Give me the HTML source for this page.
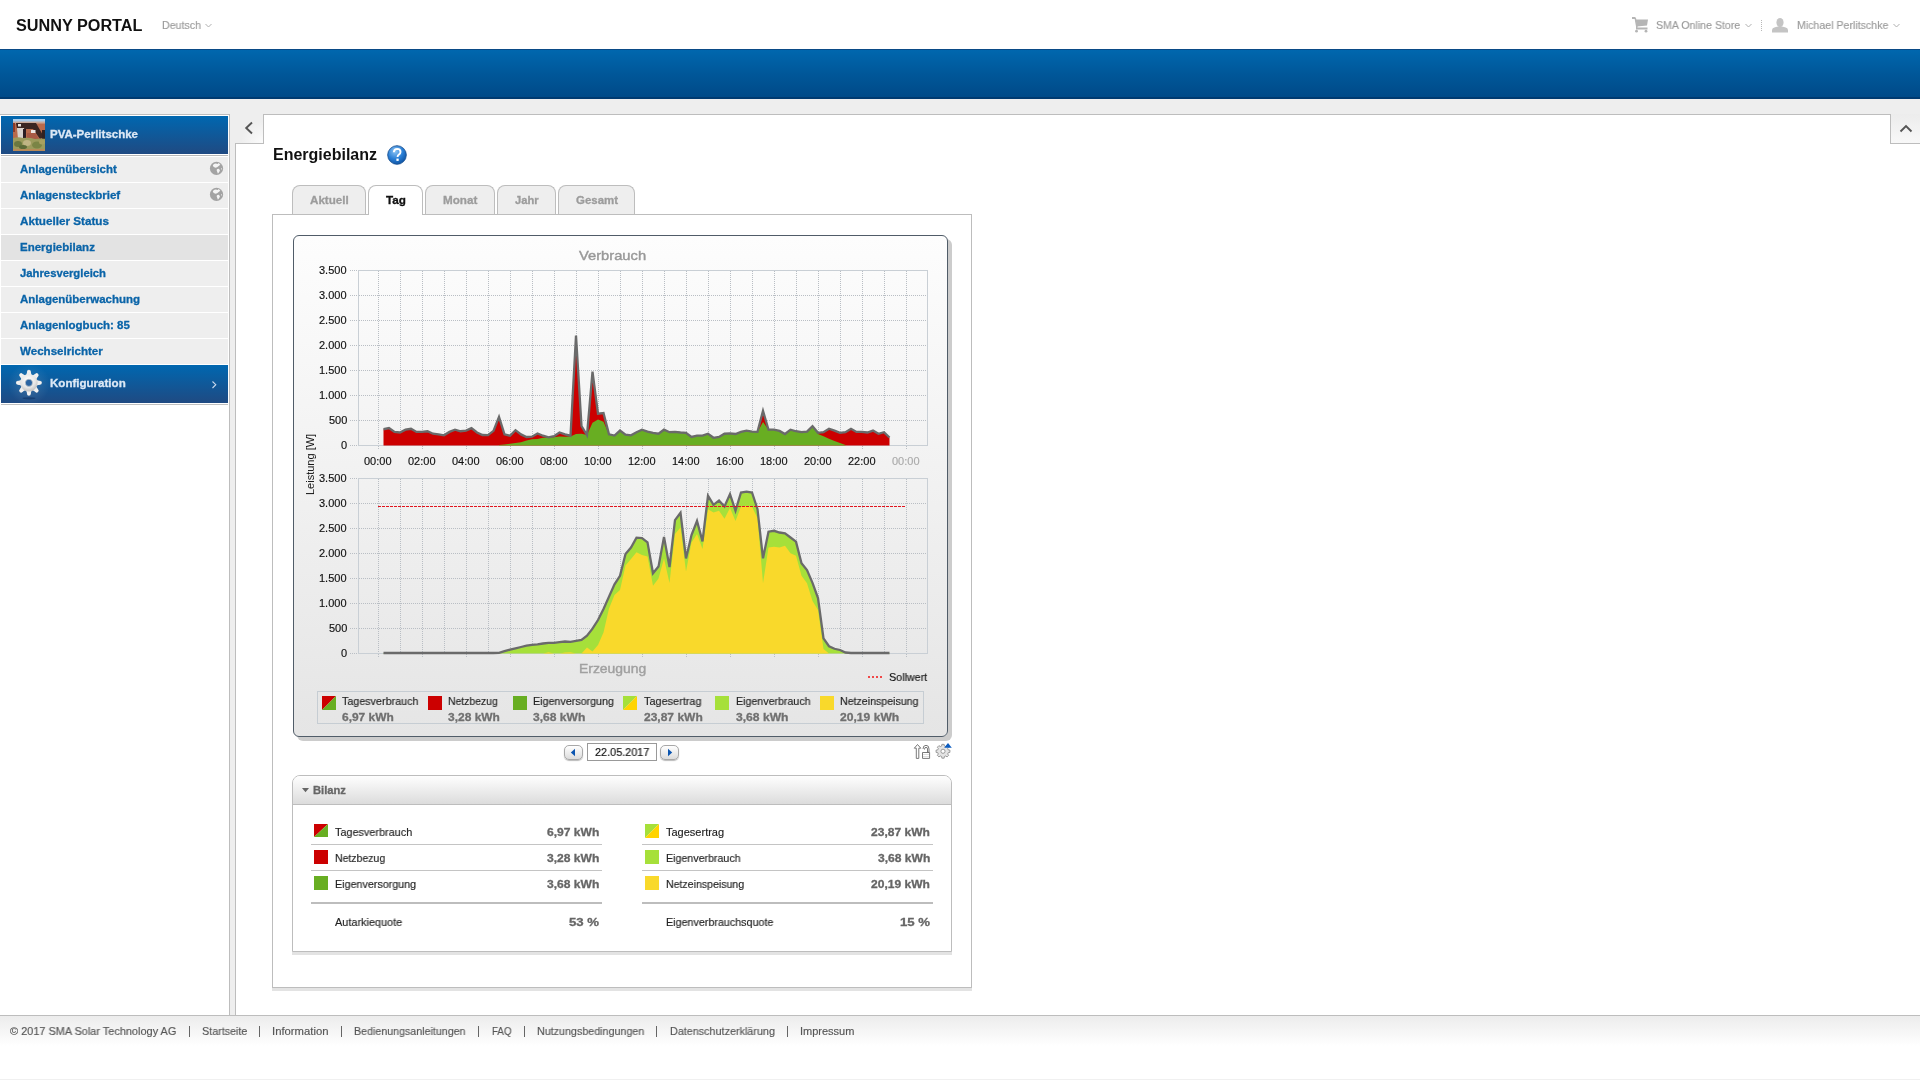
<!DOCTYPE html>
<html><head><meta charset="utf-8"><title>Sunny Portal</title><style>
html,body{margin:0;padding:0;width:1920px;height:1080px;overflow:hidden;background:#fff;font-family:"Liberation Sans",sans-serif;}
.a{position:absolute;box-sizing:border-box;}
.t{position:absolute;white-space:nowrap;line-height:1;transform-origin:0 0;will-change:transform;font-family:"Liberation Sans",sans-serif;}
#blue{left:0;top:49px;width:1920px;height:50px;background:linear-gradient(#0a4a86 0,#0a4a86 1px,#0067ae 1px,#005799 50%,#004a88 48px,#003a70 48px,#003a70 50px);}
#graybg{left:0;top:99px;width:1920px;height:917px;background:#eeeeee;}
#side{left:0;top:114px;width:230px;height:902px;background:#fff;border-top:1px solid #bdbdbd;border-right:1px solid #bdbdbd;}
.mi{left:1px;width:227px;height:25px;background:#eeeeee;}
.mi.sel{background:#e3e3e3;}
.bluehead{left:1px;width:227px;height:38px;background:linear-gradient(#0067b0,#1f4a82);}
#main1{left:235px;top:143px;width:1685px;height:873px;background:#fff;border-left:1px solid #bdbdbd;}
#main2{left:263px;top:114px;width:1627px;height:30px;background:#fff;border-top:1px solid #bdbdbd;border-left:1px solid #bdbdbd;}
#notchL{left:235px;top:114px;width:28px;height:30px;background:radial-gradient(circle at 100% 100%,#fbfbfb 0,#eeeeee 22px);border-bottom:1px solid #bdbdbd;}
#notchR{left:1890px;top:114px;width:30px;height:30px;background:linear-gradient(#ececec,#f8f8f8);border-left:1px solid #bdbdbd;border-bottom:1px solid #bdbdbd;}
#footer{left:0;top:1015px;width:1920px;height:65px;border-top:1px solid #bdbdbd;background:linear-gradient(#ececec 0,#ffffff 30px);}
#panel{left:272px;top:214px;width:700px;height:774px;background:#fff;border:1px solid #bdbdbd;box-shadow:0 3px 0 #e3e3e3;}
.tab{top:185px;height:29px;background:#eeeeee;border:1px solid #bdbdbd;border-bottom:none;border-radius:8px 8px 0 0;}
.tab.act{background:#fff;height:30px;}
#chartbox{left:293px;top:235px;width:655px;height:502px;border:1px solid #505c68;border-radius:6px;background:linear-gradient(#fdfdfd 0,#e5e5e5 100%);box-shadow:4px 4px 0 #cccccc;}
#legend{left:317px;top:691px;width:607px;height:33px;border:1px solid #c6cdd3;}
.sw{width:14px;height:14px;}
.btn{top:745px;width:19px;height:15px;border:1px solid #a8a8a8;border-radius:5px;background:linear-gradient(#ffffff,#dcdcdc);box-shadow:0 1px 1px #bbb;}
#dateinp{left:587px;top:743px;width:70px;height:18px;border:1px solid #999;background:#fff;}
#bilanz{left:292px;top:775px;width:660px;height:177px;border:1px solid #bdbdbd;border-radius:8px 8px 0 0;background:#fff;box-shadow:0 3px 0 #e3e3e3;}
#bilhead{left:293px;top:776px;width:658px;height:29px;border-radius:7px 7px 0 0;background:linear-gradient(#fefefe,#dcdcdc);border-bottom:1px solid #bdbdbd;}
.sep{height:1px;background:#c4c4c4;}
.sep2{height:2px;background:#bdbdbd;}
.fsep{top:1026px;width:1px;height:11px;background:#666;}
svg.full{position:absolute;left:0;top:0;width:1920px;height:1080px;}

</style></head><body>
<div class="a" id="blue"></div>
<div class="a" id="graybg"></div>
<div class="a" id="side"></div>
<div class="a bluehead" style="top:116px"></div>
<div class="a" style="left:1px;top:155px;width:227px;height:1px;background:#b8b8b8"></div>
<div class="a mi" style="top:157px"></div>
<div class="a mi" style="top:183px"></div>
<div class="a mi" style="top:209px"></div>
<div class="a mi sel" style="top:235px"></div>
<div class="a mi" style="top:261px"></div>
<div class="a mi" style="top:287px"></div>
<div class="a mi" style="top:313px"></div>
<div class="a mi" style="top:339px"></div>
<div class="a bluehead" style="top:365px"></div>
<div class="a" style="left:1px;top:404px;width:227px;height:1px;background:#c0c0c0"></div>
<div class="a" id="main1"></div>
<div class="a" id="main2"></div>
<div class="a" id="notchL"></div>
<div class="a" id="notchR"></div>
<div class="a" id="footer"></div>
<div class="a" style="left:0;top:1079px;width:1920px;height:1px;background:#f0f0f0"></div>
<div class="a" id="panel"></div>
<div class="a tab" style="left:292px;width:74px"></div>
<div class="a tab act" style="left:368px;width:55px"></div>
<div class="a tab" style="left:425px;width:70px"></div>
<div class="a tab" style="left:497px;width:59px"></div>
<div class="a tab" style="left:558px;width:77px"></div>
<div class="a" id="chartbox"></div>
<div class="a" id="legend"></div>
<div class="a" id="dateinp"></div>
<div class="a btn" style="left:564px"></div>
<div class="a btn" style="left:660px"></div>
<div class="a" id="bilanz"></div>
<div class="a" id="bilhead"></div>
<div class="a sep" style="left:311px;top:844px;width:291px"></div>
<div class="a sep" style="left:311px;top:870px;width:291px"></div>
<div class="a sep2" style="left:311px;top:902px;width:291px"></div>
<div class="a sep" style="left:642px;top:844px;width:291px"></div>
<div class="a sep" style="left:642px;top:870px;width:291px"></div>
<div class="a sep2" style="left:642px;top:902px;width:291px"></div>
<div class="a fsep" style="left:189px"></div>
<div class="a fsep" style="left:259px"></div>
<div class="a fsep" style="left:341px"></div>
<div class="a fsep" style="left:478px"></div>
<div class="a fsep" style="left:524px"></div>
<div class="a fsep" style="left:656px"></div>
<div class="a fsep" style="left:787px"></div>
<svg class="full" viewBox="0 0 1920 1080">
<line x1="359" y1="295.5" x2="927" y2="295.5" stroke="#b9bec4" stroke-width="1" stroke-dasharray="1 1"/>
<line x1="359" y1="320.5" x2="927" y2="320.5" stroke="#b9bec4" stroke-width="1" stroke-dasharray="1 1"/>
<line x1="359" y1="345.5" x2="927" y2="345.5" stroke="#b9bec4" stroke-width="1" stroke-dasharray="1 1"/>
<line x1="359" y1="370.5" x2="927" y2="370.5" stroke="#b9bec4" stroke-width="1" stroke-dasharray="1 1"/>
<line x1="359" y1="395.5" x2="927" y2="395.5" stroke="#b9bec4" stroke-width="1" stroke-dasharray="1 1"/>
<line x1="359" y1="420.5" x2="927" y2="420.5" stroke="#b9bec4" stroke-width="1" stroke-dasharray="1 1"/>
<line x1="350" y1="270.5" x2="358" y2="270.5" stroke="#b9bec4" stroke-width="1" stroke-dasharray="1 1"/>
<line x1="350" y1="295.5" x2="358" y2="295.5" stroke="#b9bec4" stroke-width="1" stroke-dasharray="1 1"/>
<line x1="350" y1="320.5" x2="358" y2="320.5" stroke="#b9bec4" stroke-width="1" stroke-dasharray="1 1"/>
<line x1="350" y1="345.5" x2="358" y2="345.5" stroke="#b9bec4" stroke-width="1" stroke-dasharray="1 1"/>
<line x1="350" y1="370.5" x2="358" y2="370.5" stroke="#b9bec4" stroke-width="1" stroke-dasharray="1 1"/>
<line x1="350" y1="395.5" x2="358" y2="395.5" stroke="#b9bec4" stroke-width="1" stroke-dasharray="1 1"/>
<line x1="350" y1="420.5" x2="358" y2="420.5" stroke="#b9bec4" stroke-width="1" stroke-dasharray="1 1"/>
<line x1="350" y1="445.5" x2="358" y2="445.5" stroke="#b9bec4" stroke-width="1" stroke-dasharray="1 1"/>
<line x1="378.5" y1="271" x2="378.5" y2="445" stroke="#b9bec4" stroke-width="1" stroke-dasharray="1 1"/>
<line x1="400.5" y1="271" x2="400.5" y2="445" stroke="#b9bec4" stroke-width="1" stroke-dasharray="1 1"/>
<line x1="422.5" y1="271" x2="422.5" y2="445" stroke="#b9bec4" stroke-width="1" stroke-dasharray="1 1"/>
<line x1="444.5" y1="271" x2="444.5" y2="445" stroke="#b9bec4" stroke-width="1" stroke-dasharray="1 1"/>
<line x1="466.5" y1="271" x2="466.5" y2="445" stroke="#b9bec4" stroke-width="1" stroke-dasharray="1 1"/>
<line x1="488.5" y1="271" x2="488.5" y2="445" stroke="#b9bec4" stroke-width="1" stroke-dasharray="1 1"/>
<line x1="510.5" y1="271" x2="510.5" y2="445" stroke="#b9bec4" stroke-width="1" stroke-dasharray="1 1"/>
<line x1="532.5" y1="271" x2="532.5" y2="445" stroke="#b9bec4" stroke-width="1" stroke-dasharray="1 1"/>
<line x1="554.5" y1="271" x2="554.5" y2="445" stroke="#b9bec4" stroke-width="1" stroke-dasharray="1 1"/>
<line x1="576.5" y1="271" x2="576.5" y2="445" stroke="#b9bec4" stroke-width="1" stroke-dasharray="1 1"/>
<line x1="598.5" y1="271" x2="598.5" y2="445" stroke="#b9bec4" stroke-width="1" stroke-dasharray="1 1"/>
<line x1="620.5" y1="271" x2="620.5" y2="445" stroke="#b9bec4" stroke-width="1" stroke-dasharray="1 1"/>
<line x1="642.5" y1="271" x2="642.5" y2="445" stroke="#b9bec4" stroke-width="1" stroke-dasharray="1 1"/>
<line x1="664.5" y1="271" x2="664.5" y2="445" stroke="#b9bec4" stroke-width="1" stroke-dasharray="1 1"/>
<line x1="686.5" y1="271" x2="686.5" y2="445" stroke="#b9bec4" stroke-width="1" stroke-dasharray="1 1"/>
<line x1="708.5" y1="271" x2="708.5" y2="445" stroke="#b9bec4" stroke-width="1" stroke-dasharray="1 1"/>
<line x1="730.5" y1="271" x2="730.5" y2="445" stroke="#b9bec4" stroke-width="1" stroke-dasharray="1 1"/>
<line x1="752.5" y1="271" x2="752.5" y2="445" stroke="#b9bec4" stroke-width="1" stroke-dasharray="1 1"/>
<line x1="774.5" y1="271" x2="774.5" y2="445" stroke="#b9bec4" stroke-width="1" stroke-dasharray="1 1"/>
<line x1="796.5" y1="271" x2="796.5" y2="445" stroke="#b9bec4" stroke-width="1" stroke-dasharray="1 1"/>
<line x1="818.5" y1="271" x2="818.5" y2="445" stroke="#b9bec4" stroke-width="1" stroke-dasharray="1 1"/>
<line x1="840.5" y1="271" x2="840.5" y2="445" stroke="#b9bec4" stroke-width="1" stroke-dasharray="1 1"/>
<line x1="862.5" y1="271" x2="862.5" y2="445" stroke="#b9bec4" stroke-width="1" stroke-dasharray="1 1"/>
<line x1="884.5" y1="271" x2="884.5" y2="445" stroke="#b9bec4" stroke-width="1" stroke-dasharray="1 1"/>
<line x1="906.5" y1="271" x2="906.5" y2="445" stroke="#b9bec4" stroke-width="1" stroke-dasharray="1 1"/>
<line x1="378.5" y1="446" x2="378.5" y2="450" stroke="#b9bec4" stroke-width="1" stroke-dasharray="1 1"/>
<line x1="422.5" y1="446" x2="422.5" y2="450" stroke="#b9bec4" stroke-width="1" stroke-dasharray="1 1"/>
<line x1="466.5" y1="446" x2="466.5" y2="450" stroke="#b9bec4" stroke-width="1" stroke-dasharray="1 1"/>
<line x1="510.5" y1="446" x2="510.5" y2="450" stroke="#b9bec4" stroke-width="1" stroke-dasharray="1 1"/>
<line x1="554.5" y1="446" x2="554.5" y2="450" stroke="#b9bec4" stroke-width="1" stroke-dasharray="1 1"/>
<line x1="598.5" y1="446" x2="598.5" y2="450" stroke="#b9bec4" stroke-width="1" stroke-dasharray="1 1"/>
<line x1="642.5" y1="446" x2="642.5" y2="450" stroke="#b9bec4" stroke-width="1" stroke-dasharray="1 1"/>
<line x1="686.5" y1="446" x2="686.5" y2="450" stroke="#b9bec4" stroke-width="1" stroke-dasharray="1 1"/>
<line x1="730.5" y1="446" x2="730.5" y2="450" stroke="#b9bec4" stroke-width="1" stroke-dasharray="1 1"/>
<line x1="774.5" y1="446" x2="774.5" y2="450" stroke="#b9bec4" stroke-width="1" stroke-dasharray="1 1"/>
<line x1="818.5" y1="446" x2="818.5" y2="450" stroke="#b9bec4" stroke-width="1" stroke-dasharray="1 1"/>
<line x1="862.5" y1="446" x2="862.5" y2="450" stroke="#b9bec4" stroke-width="1" stroke-dasharray="1 1"/>
<line x1="906.5" y1="446" x2="906.5" y2="450" stroke="#b9bec4" stroke-width="1" stroke-dasharray="1 1"/>
<rect x="358.5" y="270.5" width="569" height="175" fill="none" stroke="#c9cfd5" stroke-width="1"/>
<line x1="359" y1="503.5" x2="927" y2="503.5" stroke="#b9bec4" stroke-width="1" stroke-dasharray="1 1"/>
<line x1="359" y1="528.5" x2="927" y2="528.5" stroke="#b9bec4" stroke-width="1" stroke-dasharray="1 1"/>
<line x1="359" y1="553.5" x2="927" y2="553.5" stroke="#b9bec4" stroke-width="1" stroke-dasharray="1 1"/>
<line x1="359" y1="578.5" x2="927" y2="578.5" stroke="#b9bec4" stroke-width="1" stroke-dasharray="1 1"/>
<line x1="359" y1="603.5" x2="927" y2="603.5" stroke="#b9bec4" stroke-width="1" stroke-dasharray="1 1"/>
<line x1="359" y1="628.5" x2="927" y2="628.5" stroke="#b9bec4" stroke-width="1" stroke-dasharray="1 1"/>
<line x1="350" y1="478.5" x2="358" y2="478.5" stroke="#b9bec4" stroke-width="1" stroke-dasharray="1 1"/>
<line x1="350" y1="503.5" x2="358" y2="503.5" stroke="#b9bec4" stroke-width="1" stroke-dasharray="1 1"/>
<line x1="350" y1="528.5" x2="358" y2="528.5" stroke="#b9bec4" stroke-width="1" stroke-dasharray="1 1"/>
<line x1="350" y1="553.5" x2="358" y2="553.5" stroke="#b9bec4" stroke-width="1" stroke-dasharray="1 1"/>
<line x1="350" y1="578.5" x2="358" y2="578.5" stroke="#b9bec4" stroke-width="1" stroke-dasharray="1 1"/>
<line x1="350" y1="603.5" x2="358" y2="603.5" stroke="#b9bec4" stroke-width="1" stroke-dasharray="1 1"/>
<line x1="350" y1="628.5" x2="358" y2="628.5" stroke="#b9bec4" stroke-width="1" stroke-dasharray="1 1"/>
<line x1="350" y1="653.5" x2="358" y2="653.5" stroke="#b9bec4" stroke-width="1" stroke-dasharray="1 1"/>
<line x1="378.5" y1="479" x2="378.5" y2="653" stroke="#b9bec4" stroke-width="1" stroke-dasharray="1 1"/>
<line x1="400.5" y1="479" x2="400.5" y2="653" stroke="#b9bec4" stroke-width="1" stroke-dasharray="1 1"/>
<line x1="422.5" y1="479" x2="422.5" y2="653" stroke="#b9bec4" stroke-width="1" stroke-dasharray="1 1"/>
<line x1="444.5" y1="479" x2="444.5" y2="653" stroke="#b9bec4" stroke-width="1" stroke-dasharray="1 1"/>
<line x1="466.5" y1="479" x2="466.5" y2="653" stroke="#b9bec4" stroke-width="1" stroke-dasharray="1 1"/>
<line x1="488.5" y1="479" x2="488.5" y2="653" stroke="#b9bec4" stroke-width="1" stroke-dasharray="1 1"/>
<line x1="510.5" y1="479" x2="510.5" y2="653" stroke="#b9bec4" stroke-width="1" stroke-dasharray="1 1"/>
<line x1="532.5" y1="479" x2="532.5" y2="653" stroke="#b9bec4" stroke-width="1" stroke-dasharray="1 1"/>
<line x1="554.5" y1="479" x2="554.5" y2="653" stroke="#b9bec4" stroke-width="1" stroke-dasharray="1 1"/>
<line x1="576.5" y1="479" x2="576.5" y2="653" stroke="#b9bec4" stroke-width="1" stroke-dasharray="1 1"/>
<line x1="598.5" y1="479" x2="598.5" y2="653" stroke="#b9bec4" stroke-width="1" stroke-dasharray="1 1"/>
<line x1="620.5" y1="479" x2="620.5" y2="653" stroke="#b9bec4" stroke-width="1" stroke-dasharray="1 1"/>
<line x1="642.5" y1="479" x2="642.5" y2="653" stroke="#b9bec4" stroke-width="1" stroke-dasharray="1 1"/>
<line x1="664.5" y1="479" x2="664.5" y2="653" stroke="#b9bec4" stroke-width="1" stroke-dasharray="1 1"/>
<line x1="686.5" y1="479" x2="686.5" y2="653" stroke="#b9bec4" stroke-width="1" stroke-dasharray="1 1"/>
<line x1="708.5" y1="479" x2="708.5" y2="653" stroke="#b9bec4" stroke-width="1" stroke-dasharray="1 1"/>
<line x1="730.5" y1="479" x2="730.5" y2="653" stroke="#b9bec4" stroke-width="1" stroke-dasharray="1 1"/>
<line x1="752.5" y1="479" x2="752.5" y2="653" stroke="#b9bec4" stroke-width="1" stroke-dasharray="1 1"/>
<line x1="774.5" y1="479" x2="774.5" y2="653" stroke="#b9bec4" stroke-width="1" stroke-dasharray="1 1"/>
<line x1="796.5" y1="479" x2="796.5" y2="653" stroke="#b9bec4" stroke-width="1" stroke-dasharray="1 1"/>
<line x1="818.5" y1="479" x2="818.5" y2="653" stroke="#b9bec4" stroke-width="1" stroke-dasharray="1 1"/>
<line x1="840.5" y1="479" x2="840.5" y2="653" stroke="#b9bec4" stroke-width="1" stroke-dasharray="1 1"/>
<line x1="862.5" y1="479" x2="862.5" y2="653" stroke="#b9bec4" stroke-width="1" stroke-dasharray="1 1"/>
<line x1="884.5" y1="479" x2="884.5" y2="653" stroke="#b9bec4" stroke-width="1" stroke-dasharray="1 1"/>
<line x1="906.5" y1="479" x2="906.5" y2="653" stroke="#b9bec4" stroke-width="1" stroke-dasharray="1 1"/>
<line x1="378.5" y1="654" x2="378.5" y2="658" stroke="#b9bec4" stroke-width="1" stroke-dasharray="1 1"/>
<line x1="422.5" y1="654" x2="422.5" y2="658" stroke="#b9bec4" stroke-width="1" stroke-dasharray="1 1"/>
<line x1="466.5" y1="654" x2="466.5" y2="658" stroke="#b9bec4" stroke-width="1" stroke-dasharray="1 1"/>
<line x1="510.5" y1="654" x2="510.5" y2="658" stroke="#b9bec4" stroke-width="1" stroke-dasharray="1 1"/>
<line x1="554.5" y1="654" x2="554.5" y2="658" stroke="#b9bec4" stroke-width="1" stroke-dasharray="1 1"/>
<line x1="598.5" y1="654" x2="598.5" y2="658" stroke="#b9bec4" stroke-width="1" stroke-dasharray="1 1"/>
<line x1="642.5" y1="654" x2="642.5" y2="658" stroke="#b9bec4" stroke-width="1" stroke-dasharray="1 1"/>
<line x1="686.5" y1="654" x2="686.5" y2="658" stroke="#b9bec4" stroke-width="1" stroke-dasharray="1 1"/>
<line x1="730.5" y1="654" x2="730.5" y2="658" stroke="#b9bec4" stroke-width="1" stroke-dasharray="1 1"/>
<line x1="774.5" y1="654" x2="774.5" y2="658" stroke="#b9bec4" stroke-width="1" stroke-dasharray="1 1"/>
<line x1="818.5" y1="654" x2="818.5" y2="658" stroke="#b9bec4" stroke-width="1" stroke-dasharray="1 1"/>
<line x1="862.5" y1="654" x2="862.5" y2="658" stroke="#b9bec4" stroke-width="1" stroke-dasharray="1 1"/>
<line x1="906.5" y1="654" x2="906.5" y2="658" stroke="#b9bec4" stroke-width="1" stroke-dasharray="1 1"/>
<rect x="358.5" y="478.5" width="569" height="175" fill="none" stroke="#c9cfd5" stroke-width="1"/>
<path d="M383.50,445.5 L383.50,429.25 L389.00,428.10 L394.50,431.90 L400.00,432.50 L405.50,429.70 L411.00,428.75 L416.50,431.90 L422.00,431.90 L427.50,431.25 L433.00,433.75 L438.50,434.40 L444.00,435.30 L449.50,431.90 L455.00,429.70 L460.50,431.25 L466.00,430.60 L471.50,428.10 L477.00,432.50 L482.50,435.00 L488.00,435.10 L493.50,430.90 L499.00,416.90 L504.50,434.40 L510.00,435.70 L515.50,430.20 L521.00,434.40 L526.50,437.00 L532.00,436.70 L537.50,433.50 L543.00,435.70 L548.50,437.40 L554.00,436.10 L559.50,432.50 L565.00,434.40 L570.50,435.70 L576.00,335.60 L581.50,426.00 L587.00,435.10 L592.50,371.70 L598.00,413.70 L603.50,413.00 L609.00,434.40 L614.50,435.60 L620.00,430.60 L625.50,434.70 L631.00,435.30 L636.50,432.20 L642.00,429.70 L647.50,431.60 L653.00,432.80 L658.50,433.75 L664.00,429.70 L669.50,432.20 L675.00,431.90 L680.50,432.50 L686.00,432.80 L691.50,436.90 L697.00,435.60 L702.50,435.60 L708.00,433.75 L713.50,437.80 L719.00,437.00 L724.50,433.75 L730.00,433.40 L735.50,434.00 L741.00,431.90 L746.50,430.60 L752.00,431.60 L757.50,431.90 L763.00,410.90 L768.50,429.70 L774.00,429.70 L779.50,430.90 L785.00,434.00 L790.50,429.70 L796.00,431.25 L801.50,432.20 L807.00,431.60 L812.50,426.25 L818.00,432.80 L823.50,432.20 L829.00,428.75 L834.50,430.60 L840.00,432.80 L845.50,432.20 L851.00,428.75 L856.50,431.90 L862.00,431.90 L867.50,432.50 L873.00,430.60 L878.50,433.75 L884.00,432.20 L889.50,437.50 L889.50,445.5 Z" fill="#cc0000"/>
<path d="M499.00,445.5 L499.00,445.00 L504.50,444.50 L510.00,443.80 L515.50,443.00 L521.00,442.20 L526.50,440.50 L532.00,439.30 L537.50,439.00 L543.00,437.70 L548.50,437.40 L554.00,437.20 L559.50,436.40 L565.00,436.70 L570.50,436.60 L576.00,434.10 L581.50,433.80 L587.00,435.10 L592.50,422.80 L598.00,419.40 L603.50,421.70 L609.00,434.40 L614.50,435.60 L620.00,430.60 L625.50,434.70 L631.00,435.30 L636.50,432.20 L642.00,429.70 L647.50,431.60 L653.00,432.80 L658.50,433.75 L664.00,429.70 L669.50,432.20 L675.00,431.90 L680.50,432.50 L686.00,432.80 L691.50,436.90 L697.00,435.60 L702.50,435.60 L708.00,433.75 L713.50,437.80 L719.00,437.00 L724.50,433.75 L730.00,433.40 L735.50,434.00 L741.00,431.90 L746.50,430.60 L752.00,431.60 L757.50,431.90 L763.00,421.90 L768.50,429.70 L774.00,429.70 L779.50,430.90 L785.00,434.00 L790.50,429.70 L796.00,431.25 L801.50,432.20 L807.00,431.60 L812.50,426.25 L818.00,434.00 L823.50,436.25 L829.00,438.75 L834.50,440.90 L840.00,443.00 L845.50,445.00 L845.50,445.5 Z" fill="#68ae22"/>
<path d="M383.50,429.25 L389.00,428.10 L394.50,431.90 L400.00,432.50 L405.50,429.70 L411.00,428.75 L416.50,431.90 L422.00,431.90 L427.50,431.25 L433.00,433.75 L438.50,434.40 L444.00,435.30 L449.50,431.90 L455.00,429.70 L460.50,431.25 L466.00,430.60 L471.50,428.10 L477.00,432.50 L482.50,435.00 L488.00,435.10 L493.50,430.90 L499.00,416.90 L504.50,434.40 L510.00,435.70 L515.50,430.20 L521.00,434.40 L526.50,437.00 L532.00,436.70 L537.50,433.50 L543.00,435.70 L548.50,437.40 L554.00,436.10 L559.50,432.50 L565.00,434.40 L570.50,435.70 L576.00,335.60 L581.50,426.00 L587.00,435.10 L592.50,371.70 L598.00,413.70 L603.50,413.00 L609.00,434.40 L614.50,435.60 L620.00,430.60 L625.50,434.70 L631.00,435.30 L636.50,432.20 L642.00,429.70 L647.50,431.60 L653.00,432.80 L658.50,433.75 L664.00,429.70 L669.50,432.20 L675.00,431.90 L680.50,432.50 L686.00,432.80 L691.50,436.90 L697.00,435.60 L702.50,435.60 L708.00,433.75 L713.50,437.80 L719.00,437.00 L724.50,433.75 L730.00,433.40 L735.50,434.00 L741.00,431.90 L746.50,430.60 L752.00,431.60 L757.50,431.90 L763.00,410.90 L768.50,429.70 L774.00,429.70 L779.50,430.90 L785.00,434.00 L790.50,429.70 L796.00,431.25 L801.50,432.20 L807.00,431.60 L812.50,426.25 L818.00,432.80 L823.50,432.20 L829.00,428.75 L834.50,430.60 L840.00,432.80 L845.50,432.20 L851.00,428.75 L856.50,431.90 L862.00,431.90 L867.50,432.50 L873.00,430.60 L878.50,433.75 L884.00,432.20 L889.50,437.50" fill="none" stroke="#6a6a6a" stroke-width="2.3" stroke-linejoin="miter"/>
<path d="M383.50,653.5 L383.50,653.00 L389.00,653.00 L394.50,653.00 L400.00,653.00 L405.50,653.00 L411.00,653.00 L416.50,653.00 L422.00,653.00 L427.50,653.00 L433.00,653.00 L438.50,653.00 L444.00,653.00 L449.50,653.00 L455.00,653.00 L460.50,653.00 L466.00,653.00 L471.50,653.00 L477.00,653.00 L482.50,653.00 L488.00,653.00 L493.50,653.00 L499.00,652.90 L504.50,651.20 L510.00,649.60 L515.50,648.30 L521.00,647.00 L526.50,645.70 L532.00,644.80 L537.50,644.40 L543.00,643.50 L548.50,642.80 L554.00,642.80 L559.50,642.20 L565.00,641.50 L570.50,641.80 L576.00,640.90 L581.50,639.90 L587.00,635.70 L592.50,628.60 L598.00,620.00 L603.50,609.00 L609.00,596.60 L614.50,584.40 L620.00,575.80 L625.50,554.00 L631.00,547.50 L636.50,537.70 L642.00,538.10 L647.50,542.30 L653.00,573.30 L658.50,566.60 L664.00,536.90 L669.50,567.00 L675.00,520.10 L680.50,512.70 L686.00,558.40 L691.50,535.00 L697.00,521.00 L702.50,541.40 L708.00,495.70 L713.50,504.80 L719.00,500.60 L724.50,506.50 L730.00,494.10 L735.50,510.70 L741.00,492.50 L746.50,491.70 L752.00,492.50 L757.50,509.20 L763.00,558.30 L768.50,531.70 L774.00,530.80 L779.50,532.50 L785.00,533.30 L790.50,537.50 L796.00,541.70 L801.50,563.30 L807.00,570.00 L812.50,582.80 L818.00,598.00 L823.50,638.30 L829.00,646.25 L834.50,648.75 L840.00,650.00 L845.50,652.50 L851.00,653.00 L856.50,653.00 L862.00,653.00 L867.50,653.00 L873.00,653.00 L878.50,653.00 L884.00,653.00 L889.50,653.00 L889.50,653.5 Z" fill="#a6e03a"/>
<path d="M499.00,653.5 L499.00,653.50 L504.50,653.50 L510.00,653.50 L515.50,653.50 L521.00,653.50 L526.50,653.50 L532.00,653.50 L537.50,653.50 L543.00,653.50 L548.50,652.20 L554.00,653.50 L559.50,653.50 L565.00,652.50 L570.50,652.20 L576.00,653.50 L581.50,653.50 L587.00,647.40 L592.50,651.60 L598.00,645.00 L603.50,632.50 L609.00,608.50 L614.50,595.00 L620.00,590.00 L625.50,565.50 L631.00,559.00 L636.50,552.20 L642.00,555.00 L647.50,556.60 L653.00,585.70 L658.50,578.50 L664.00,558.60 L669.50,583.00 L675.00,534.00 L680.50,527.60 L686.00,571.40 L691.50,542.60 L697.00,534.00 L702.50,549.00 L708.00,509.30 L713.50,512.60 L719.00,510.70 L724.50,518.70 L730.00,508.00 L735.50,521.00 L741.00,506.70 L746.50,505.80 L752.00,506.70 L757.50,518.30 L763.00,583.30 L768.50,547.50 L774.00,546.70 L779.50,547.50 L785.00,545.80 L790.50,553.30 L796.00,555.80 L801.50,575.80 L807.00,583.30 L812.50,601.00 L818.00,610.00 L823.50,649.00 L829.00,653.50 L834.50,653.50 L840.00,653.50 L845.50,653.50 L845.50,653.5 Z" fill="#f9d92b"/>
<path d="M383.50,653.00 L389.00,653.00 L394.50,653.00 L400.00,653.00 L405.50,653.00 L411.00,653.00 L416.50,653.00 L422.00,653.00 L427.50,653.00 L433.00,653.00 L438.50,653.00 L444.00,653.00 L449.50,653.00 L455.00,653.00 L460.50,653.00 L466.00,653.00 L471.50,653.00 L477.00,653.00 L482.50,653.00 L488.00,653.00 L493.50,653.00 L499.00,652.90 L504.50,651.20 L510.00,649.60 L515.50,648.30 L521.00,647.00 L526.50,645.70 L532.00,644.80 L537.50,644.40 L543.00,643.50 L548.50,642.80 L554.00,642.80 L559.50,642.20 L565.00,641.50 L570.50,641.80 L576.00,640.90 L581.50,639.90 L587.00,635.70 L592.50,628.60 L598.00,620.00 L603.50,609.00 L609.00,596.60 L614.50,584.40 L620.00,575.80 L625.50,554.00 L631.00,547.50 L636.50,537.70 L642.00,538.10 L647.50,542.30 L653.00,573.30 L658.50,566.60 L664.00,536.90 L669.50,567.00 L675.00,520.10 L680.50,512.70 L686.00,558.40 L691.50,535.00 L697.00,521.00 L702.50,541.40 L708.00,495.70 L713.50,504.80 L719.00,500.60 L724.50,506.50 L730.00,494.10 L735.50,510.70 L741.00,492.50 L746.50,491.70 L752.00,492.50 L757.50,509.20 L763.00,558.30 L768.50,531.70 L774.00,530.80 L779.50,532.50 L785.00,533.30 L790.50,537.50 L796.00,541.70 L801.50,563.30 L807.00,570.00 L812.50,582.80 L818.00,598.00 L823.50,638.30 L829.00,646.25 L834.50,648.75 L840.00,650.00 L845.50,652.50 L851.00,653.00 L856.50,653.00 L862.00,653.00 L867.50,653.00 L873.00,653.00 L878.50,653.00 L884.00,653.00 L889.50,653.00" fill="none" stroke="#6a6a6a" stroke-width="2.3" stroke-linejoin="miter"/>
<line x1="378" y1="506.5" x2="906" y2="506.5" stroke="#e0141e" stroke-width="1.2" stroke-dasharray="3 1"/>
<defs>
<radialGradient id="helpg" cx="40%" cy="30%" r="75%"><stop offset="0" stop-color="#8cc4f4"/><stop offset="0.55" stop-color="#2a7fd6"/><stop offset="1" stop-color="#0b4f9e"/></radialGradient>
<radialGradient id="gearg" cx="45%" cy="35%" r="70%"><stop offset="0" stop-color="#ffffff"/><stop offset="0.6" stop-color="#e6e6e6"/><stop offset="1" stop-color="#b8b8b8"/></radialGradient>
<linearGradient id="sky" x1="0" y1="0" x2="0" y2="1"><stop offset="0" stop-color="#8fbbe6"/><stop offset="1" stop-color="#b9d2ea"/></linearGradient>
</defs>
<!-- notch chevrons -->
<polyline points="252,122.5 246.2,128 252,133.5" fill="none" stroke="#555" stroke-width="1.9"/>
<polyline points="1900.5,131.5 1906,126 1911.5,131.5" fill="none" stroke="#555" stroke-width="1.9"/>
<!-- header chevrons -->
<polyline points="205.5,24 208.5,27 211.5,24" fill="none" stroke="#b0b0b0" stroke-width="1"/>
<polyline points="1745.5,24 1748.5,27 1751.5,24" fill="none" stroke="#b0b0b0" stroke-width="1"/>
<polyline points="1893.5,24 1896.5,27 1899.5,24" fill="none" stroke="#b0b0b0" stroke-width="1"/>
<line x1="1761.5" y1="20" x2="1761.5" y2="31" stroke="#b8b8b8" stroke-width="1" stroke-dasharray="1 1"/>
<!-- cart -->
<g fill="#b5b5b5">
<rect x="1632" y="17" width="3.5" height="2"/>
<path d="M1634.5,18 L1636,18 L1637.5,26.5 L1636,26.5 Z"/>
<path d="M1635.5,19.5 L1648,19.5 L1647,25.5 L1637,26.5 Z"/>
<rect x="1636" y="27.5" width="11.5" height="2"/>
<path d="M1636,26 L1637.5,26 L1637.5,28 L1636,28 Z"/>
<circle cx="1636.5" cy="31.2" r="1.4"/><circle cx="1646" cy="31.2" r="1.4"/>
</g>
<!-- user -->
<g fill="#c4c4c4">
<ellipse cx="1780" cy="22.6" rx="3.6" ry="4.6"/>
<path d="M1772,32.5 L1772,30 Q1772,28 1775,27.3 L1778,26.5 L1782,26.5 L1785,27.3 Q1788,28 1788,30 L1788,32.5 Z"/>
</g>
<!-- help icon -->
<circle cx="397" cy="155" r="9.3" fill="url(#helpg)" stroke="#1d5494" stroke-width="0.9"/>
<path d="M393.8,152.3 Q394,148.9 397.2,148.9 Q400.5,149 400.5,152 Q400.5,153.8 398.6,154.8 Q397.6,155.4 397.6,157" fill="none" stroke="#fff" stroke-width="1.9"/>
<rect x="396.4" y="158.6" width="2.3" height="2.3" fill="#fff"/>
<!-- house image -->
<clipPath id="hclip"><rect x="13" y="119" width="32" height="32"/></clipPath>
<filter id="hblur" x="-10%" y="-10%" width="120%" height="120%"><feGaussianBlur stdDeviation="0.55"/></filter>
<g clip-path="url(#hclip)"><g transform="translate(13,119)" filter="url(#hblur)">
<rect x="-2" y="-2" width="36" height="36" fill="#b86a4c"/>
<rect x="-2" y="-2" width="36" height="5" fill="#a9cdec"/>
<rect x="-2" y="2.5" width="36" height="2" fill="#c8a898"/>
<rect x="-2" y="4" width="4" height="9" fill="#8a3a2a"/>
<path d="M3,4 L23,4 L31,18 L27,20 L20,10 L4,10 Z" fill="#3a2624"/>
<path d="M4,9 L11,9 L12,19 L5,20 Z" fill="#d9d2cc"/>
<rect x="10" y="10" width="3" height="10" fill="#2a1e20"/>
<rect x="5" y="5" width="3" height="2.5" fill="#e8e4e0"/>
<rect x="18" y="11" width="4.5" height="3" fill="#ece6e2"/>
<path d="M14,14 L22,14 L26,20 L14,20 Z" fill="#a85a44"/>
<rect x="29" y="11" width="3" height="9" fill="#302022"/>
<path d="M-2,20 Q4,17 10,19 Q16,18 22,20 Q28,19 34,20 L34,34 L-2,34 Z" fill="#9b9a5c"/>
<ellipse cx="5" cy="25" rx="4" ry="3" fill="#6a7840"/>
<ellipse cx="14" cy="24" rx="4" ry="3" fill="#c0b484"/>
<ellipse cx="24" cy="26" rx="5" ry="3.5" fill="#7a8444"/>
<ellipse cx="29" cy="23" rx="3" ry="2.5" fill="#a8a060"/>
<ellipse cx="10" cy="28" rx="4" ry="2" fill="#5c6a38"/>
<rect x="-2" y="30" width="36" height="4" fill="#b88a58"/>
</g></g>
<!-- globes -->
<g transform="translate(216.5,168.4)"><circle r="6.6" fill="#a3a3a3"/><path d="M-3.7,-2.8 Q-3,-4.6 -0.8,-4.8 L1.2,-4.5 L2.2,-5.3 L3.8,-3.7 L2.2,-2.5 L0.6,-1.1 L-1,-0.7 L-2.8,-1.5 Z M0.4,0.8 L2.4,0.4 L3.5,2 L2.7,3.5 L1.4,5.3 L0.8,3.7 L0.2,2.2 Z M4.6,0 L5.4,-0.4 L5.5,1 L4.8,1.2 Z" fill="#f4f4f4"/></g>
<g transform="translate(216.5,194.4)"><circle r="6.6" fill="#a3a3a3"/><path d="M-3.7,-2.8 Q-3,-4.6 -0.8,-4.8 L1.2,-4.5 L2.2,-5.3 L3.8,-3.7 L2.2,-2.5 L0.6,-1.1 L-1,-0.7 L-2.8,-1.5 Z M0.4,0.8 L2.4,0.4 L3.5,2 L2.7,3.5 L1.4,5.3 L0.8,3.7 L0.2,2.2 Z M4.6,0 L5.4,-0.4 L5.5,1 L4.8,1.2 Z" fill="#f4f4f4"/></g>
<!-- gear -->
<radialGradient id="glow" cx="50%" cy="50%" r="50%"><stop offset="0" stop-color="#ffffff" stop-opacity="0.16"/><stop offset="1" stop-color="#ffffff" stop-opacity="0"/></radialGradient>
<circle cx="29" cy="384" r="21" fill="url(#glow)"/>
<ellipse cx="29" cy="398.3" rx="6.5" ry="1.1" fill="#0a3060" opacity="0.55"/>
<g transform="translate(28.9,382.8)">
<g stroke="#d8d8d8" stroke-width="3.9" stroke-linecap="round"><line x1="0" y1="-6" x2="0" y2="-11" transform="rotate(0)"/><line x1="0" y1="-6" x2="0" y2="-11" transform="rotate(45)"/><line x1="0" y1="-6" x2="0" y2="-11" transform="rotate(90)"/><line x1="0" y1="-6" x2="0" y2="-11" transform="rotate(135)"/><line x1="0" y1="-6" x2="0" y2="-11" transform="rotate(180)"/><line x1="0" y1="-6" x2="0" y2="-11" transform="rotate(225)"/><line x1="0" y1="-6" x2="0" y2="-11" transform="rotate(270)"/><line x1="0" y1="-6" x2="0" y2="-11" transform="rotate(315)"/></g>
<g stroke="#f4f4f4" stroke-width="3.0" stroke-linecap="round"><line x1="0" y1="-6" x2="0" y2="-11" transform="rotate(0)"/><line x1="0" y1="-6" x2="0" y2="-11" transform="rotate(45)"/><line x1="0" y1="-6" x2="0" y2="-11" transform="rotate(90)"/><line x1="0" y1="-6" x2="0" y2="-11" transform="rotate(135)"/><line x1="0" y1="-6" x2="0" y2="-11" transform="rotate(180)"/><line x1="0" y1="-6" x2="0" y2="-11" transform="rotate(225)"/><line x1="0" y1="-6" x2="0" y2="-11" transform="rotate(270)"/><line x1="0" y1="-6" x2="0" y2="-11" transform="rotate(315)"/></g>
<g fill="#efefef"><path d="M-3,-7 L3,-7 L1.6,-11 L-1.6,-11 Z" transform="rotate(0)"/><path d="M-3,-7 L3,-7 L1.6,-11 L-1.6,-11 Z" transform="rotate(45)"/><path d="M-3,-7 L3,-7 L1.6,-11 L-1.6,-11 Z" transform="rotate(90)"/><path d="M-3,-7 L3,-7 L1.6,-11 L-1.6,-11 Z" transform="rotate(135)"/><path d="M-3,-7 L3,-7 L1.6,-11 L-1.6,-11 Z" transform="rotate(180)"/><path d="M-3,-7 L3,-7 L1.6,-11 L-1.6,-11 Z" transform="rotate(225)"/><path d="M-3,-7 L3,-7 L1.6,-11 L-1.6,-11 Z" transform="rotate(270)"/><path d="M-3,-7 L3,-7 L1.6,-11 L-1.6,-11 Z" transform="rotate(315)"/></g>
<circle r="8.7" fill="url(#gearg)"/>
<circle r="3.6" fill="#2a64a2" stroke="#c8c8c8" stroke-width="0.7"/>
</g>
<polyline points="212.5,381.5 215.8,384.7 212.5,388" fill="none" stroke="#c8d8ec" stroke-width="1.1"/>
<!-- legend swatches -->
<path d="M322,696 L336,696 L322,710 Z" fill="#cc0000"/><path d="M336,696 L336,710 L322,710 Z" fill="#68ae22"/>
<rect x="428" y="696" width="14" height="14" fill="#cc0000"/>
<rect x="513" y="696" width="14" height="14" fill="#68ae22"/>
<path d="M623,696 L637,696 L623,710 Z" fill="#a6e03a"/><path d="M637,696 L637,710 L623,710 Z" fill="#ffd400"/>
<rect x="715" y="696" width="14" height="14" fill="#a6e03a"/>
<rect x="820" y="696" width="14" height="14" fill="#f9d92b"/>
<!-- sollwert dots -->
<g fill="#f04848"><rect x="868" y="676" width="2" height="2"/><rect x="872" y="676" width="2" height="2"/><rect x="876" y="676" width="2" height="2"/><rect x="880" y="676" width="2" height="2"/></g>
<!-- date nav triangles -->
<path d="M570.8,752.5 L575,748.8 L575,756.2 Z" fill="#0b55b0"/>
<path d="M672.2,752.5 L668,748.8 L668,756.2 Z" fill="#0b55b0"/>
<!-- export / settings icons -->
<g fill="#fff" stroke="#6a6a6a" stroke-width="0.9">
<path d="M917.5,744.5 L920.8,748.2 L918.8,748.2 L918.8,758.4 L916.3,758.4 L916.3,748.2 L914.3,748.2 Z"/>
<path d="M922.5,752.5 L922.5,758.4 L929.6,758.4 L929.6,752.5 Z"/>
<path d="M923,749 Q923,745.3 926,745.3 Q929,745.3 929,749 L929,752.3 L927.5,752.3 L927.5,749 Q927.5,747.3 926,747.3 Q924.5,747.3 924.5,749.5" fill="none"/>
</g>
<g stroke="#c8c8c8" stroke-width="0.6" fill="none"><line x1="923" y1="754.5" x2="929" y2="754.5"/><line x1="923" y1="756.5" x2="929" y2="756.5"/></g>
<g transform="translate(943,751) scale(0.52)">
<path d="M-2.2,-12.8 L2.2,-12.8 L2.6,-9.6 L5.3,-8.5 L7.8,-10.4 L10.9,-7.3 L9,-4.8 L10.1,-2.1 L13.3,-1.7 L13.3,2.7 L10.1,3.1 L9,5.8 L10.9,8.3 L7.8,11.4 L5.3,9.5 L2.6,10.6 L2.2,13.8 L-2.2,13.8 L-2.6,10.6 L-5.3,9.5 L-7.8,11.4 L-10.9,8.3 L-9,5.8 L-10.1,3.1 L-13.3,2.7 L-13.3,-1.7 L-10.1,-2.1 L-9,-4.8 L-10.9,-7.3 L-7.8,-10.4 L-5.3,-8.5 L-2.6,-9.6 Z" fill="#e4e4e4" stroke="#8a8a8a" stroke-width="1.6"/>
<circle cx="0" cy="0.5" r="4" fill="#fff" stroke="#8a8a8a" stroke-width="1.6"/>
</g>
<path d="M944.2,747.8 L948,743 L951.8,747.8 Z" fill="#0b5cc0"/>
<!-- bilanz -->
<path d="M302,788 L309,788 L305.5,792.3 Z" fill="#666"/>
<path d="M314,824 L328,824 L314,837 Z" fill="#cc0000"/><path d="M328,824 L328,837 L314,837 Z" fill="#68ae22"/>
<rect x="314" y="850" width="14" height="14" fill="#cc0000"/>
<rect x="314" y="876" width="14" height="14" fill="#68ae22"/>
<path d="M645,824 L659,824 L645,838 Z" fill="#a6e03a"/><path d="M659,824 L659,838 L645,838 Z" fill="#ffd400"/>
<rect x="645" y="850" width="14" height="14" fill="#a6e03a"/>
<rect x="645" y="876" width="14" height="14" fill="#f9d92b"/>

</svg>
<div class="t" id="t0" style="left:15.60px;top:18.00px;font-size:16px;font-weight:bold;color:#111;transform:scaleX(1.0132);">SUNNY PORTAL</div>
<div class="t" id="t1" style="left:162.00px;top:20.00px;font-size:11px;-webkit-text-stroke:0.15px currentColor;color:#9a9a9a;transform:scaleX(0.9663);">Deutsch</div>
<div class="t" id="t2" style="left:1656.00px;top:20.00px;font-size:11px;-webkit-text-stroke:0.15px currentColor;color:#9a9a9a;transform:scaleX(0.9630);">SMA Online Store</div>
<div class="t" id="t3" style="left:1796.70px;top:20.00px;font-size:11px;-webkit-text-stroke:0.15px currentColor;color:#9a9a9a;transform:scaleX(0.9634);">Michael Perlitschke</div>
<div class="t" id="t4" style="left:50.00px;top:129.00px;font-size:11px;font-weight:bold;-webkit-text-stroke:0.3px currentColor;color:#dce8f5;transform:scaleX(1.0455);">PVA-Perlitschke</div>
<div class="t" id="t5" style="left:20.00px;top:164.00px;font-size:11px;font-weight:bold;-webkit-text-stroke:0.3px currentColor;color:#0a64a8;transform:scaleX(1.0419);">Anlagenübersicht</div>
<div class="t" id="t6" style="left:20.00px;top:190.00px;font-size:11px;font-weight:bold;-webkit-text-stroke:0.3px currentColor;color:#0a64a8;transform:scaleX(1.0506);">Anlagensteckbrief</div>
<div class="t" id="t7" style="left:20.00px;top:216.00px;font-size:11px;font-weight:bold;-webkit-text-stroke:0.3px currentColor;color:#0a64a8;transform:scaleX(1.0627);">Aktueller Status</div>
<div class="t" id="t8" style="left:20.00px;top:242.00px;font-size:11px;font-weight:bold;-webkit-text-stroke:0.3px currentColor;color:#0a64a8;transform:scaleX(1.0471);">Energiebilanz</div>
<div class="t" id="t9" style="left:20.00px;top:268.00px;font-size:11px;font-weight:bold;-webkit-text-stroke:0.3px currentColor;color:#0a64a8;transform:scaleX(1.0265);">Jahresvergleich</div>
<div class="t" id="t10" style="left:20.00px;top:294.00px;font-size:11px;font-weight:bold;-webkit-text-stroke:0.3px currentColor;color:#0a64a8;transform:scaleX(1.0443);">Anlagenüberwachung</div>
<div class="t" id="t11" style="left:20.00px;top:320.00px;font-size:11px;font-weight:bold;-webkit-text-stroke:0.3px currentColor;color:#0a64a8;transform:scaleX(1.0454);">Anlagenlogbuch: 85</div>
<div class="t" id="t12" style="left:20.00px;top:346.00px;font-size:11px;font-weight:bold;-webkit-text-stroke:0.3px currentColor;color:#0a64a8;transform:scaleX(1.0525);">Wechselrichter</div>
<div class="t" id="t13" style="left:50.00px;top:378.00px;font-size:11px;font-weight:bold;-webkit-text-stroke:0.3px currentColor;color:#dce8f5;transform:scaleX(1.0498);">Konfiguration</div>
<div class="t" id="t14" style="left:272.90px;top:147.00px;font-size:16px;font-weight:bold;color:#111;">Energiebilanz</div>
<div class="t" id="t15" style="left:310.10px;top:195.00px;font-size:11px;font-weight:bold;-webkit-text-stroke:0.3px currentColor;color:#9c9c9c;transform:scaleX(1.0576);">Aktuell</div>
<div class="t" id="t16" style="left:386.00px;top:195.00px;font-size:11px;font-weight:bold;-webkit-text-stroke:0.3px currentColor;color:#111;transform:scaleX(1.0613);">Tag</div>
<div class="t" id="t17" style="left:443.30px;top:195.00px;font-size:11px;font-weight:bold;-webkit-text-stroke:0.3px currentColor;color:#9c9c9c;transform:scaleX(1.0620);">Monat</div>
<div class="t" id="t18" style="left:515.20px;top:195.00px;font-size:11px;font-weight:bold;-webkit-text-stroke:0.3px currentColor;color:#9c9c9c;transform:scaleX(1.0129);">Jahr</div>
<div class="t" id="t19" style="left:576.10px;top:195.00px;font-size:11px;font-weight:bold;-webkit-text-stroke:0.3px currentColor;color:#9c9c9c;transform:scaleX(1.0407);">Gesamt</div>
<div class="t" id="t20" style="left:578.90px;top:249.00px;font-size:13px;-webkit-text-stroke:0.4px currentColor;color:#999;transform:scaleX(1.1322);">Verbrauch</div>
<div class="t" id="t21" style="left:578.75px;top:662.00px;font-size:13px;-webkit-text-stroke:0.4px currentColor;color:#a0a0a0;transform:scaleX(1.0693);">Erzeugung</div>
<div class="t" id="t22" style="left:319.47px;top:265.00px;font-size:11px;-webkit-text-stroke:0.15px currentColor;color:#111;">3.500</div>
<div class="t" id="t23" style="left:319.47px;top:473.00px;font-size:11px;-webkit-text-stroke:0.15px currentColor;color:#111;">3.500</div>
<div class="t" id="t24" style="left:319.47px;top:290.00px;font-size:11px;-webkit-text-stroke:0.15px currentColor;color:#111;">3.000</div>
<div class="t" id="t25" style="left:319.47px;top:498.00px;font-size:11px;-webkit-text-stroke:0.15px currentColor;color:#111;">3.000</div>
<div class="t" id="t26" style="left:319.47px;top:315.00px;font-size:11px;-webkit-text-stroke:0.15px currentColor;color:#111;">2.500</div>
<div class="t" id="t27" style="left:319.47px;top:523.00px;font-size:11px;-webkit-text-stroke:0.15px currentColor;color:#111;">2.500</div>
<div class="t" id="t28" style="left:319.47px;top:340.00px;font-size:11px;-webkit-text-stroke:0.15px currentColor;color:#111;">2.000</div>
<div class="t" id="t29" style="left:319.47px;top:548.00px;font-size:11px;-webkit-text-stroke:0.15px currentColor;color:#111;">2.000</div>
<div class="t" id="t30" style="left:319.47px;top:365.00px;font-size:11px;-webkit-text-stroke:0.15px currentColor;color:#111;">1.500</div>
<div class="t" id="t31" style="left:319.47px;top:573.00px;font-size:11px;-webkit-text-stroke:0.15px currentColor;color:#111;">1.500</div>
<div class="t" id="t32" style="left:319.47px;top:390.00px;font-size:11px;-webkit-text-stroke:0.15px currentColor;color:#111;">1.000</div>
<div class="t" id="t33" style="left:319.47px;top:598.00px;font-size:11px;-webkit-text-stroke:0.15px currentColor;color:#111;">1.000</div>
<div class="t" id="t34" style="left:328.64px;top:415.00px;font-size:11px;-webkit-text-stroke:0.15px currentColor;color:#111;">500</div>
<div class="t" id="t35" style="left:328.64px;top:623.00px;font-size:11px;-webkit-text-stroke:0.15px currentColor;color:#111;">500</div>
<div class="t" id="t36" style="left:340.88px;top:440.00px;font-size:11px;-webkit-text-stroke:0.15px currentColor;color:#111;">0</div>
<div class="t" id="t37" style="left:340.88px;top:648.00px;font-size:11px;-webkit-text-stroke:0.15px currentColor;color:#111;">0</div>
<div class="t" id="t38" style="left:364.23px;top:456.00px;font-size:11px;-webkit-text-stroke:0.15px currentColor;color:#111;">00:00</div>
<div class="t" id="t39" style="left:408.23px;top:456.00px;font-size:11px;-webkit-text-stroke:0.15px currentColor;color:#111;">02:00</div>
<div class="t" id="t40" style="left:452.23px;top:456.00px;font-size:11px;-webkit-text-stroke:0.15px currentColor;color:#111;">04:00</div>
<div class="t" id="t41" style="left:496.23px;top:456.00px;font-size:11px;-webkit-text-stroke:0.15px currentColor;color:#111;">06:00</div>
<div class="t" id="t42" style="left:540.23px;top:456.00px;font-size:11px;-webkit-text-stroke:0.15px currentColor;color:#111;">08:00</div>
<div class="t" id="t43" style="left:584.23px;top:456.00px;font-size:11px;-webkit-text-stroke:0.15px currentColor;color:#111;">10:00</div>
<div class="t" id="t44" style="left:628.23px;top:456.00px;font-size:11px;-webkit-text-stroke:0.15px currentColor;color:#111;">12:00</div>
<div class="t" id="t45" style="left:672.23px;top:456.00px;font-size:11px;-webkit-text-stroke:0.15px currentColor;color:#111;">14:00</div>
<div class="t" id="t46" style="left:716.23px;top:456.00px;font-size:11px;-webkit-text-stroke:0.15px currentColor;color:#111;">16:00</div>
<div class="t" id="t47" style="left:760.23px;top:456.00px;font-size:11px;-webkit-text-stroke:0.15px currentColor;color:#111;">18:00</div>
<div class="t" id="t48" style="left:804.23px;top:456.00px;font-size:11px;-webkit-text-stroke:0.15px currentColor;color:#111;">20:00</div>
<div class="t" id="t49" style="left:848.23px;top:456.00px;font-size:11px;-webkit-text-stroke:0.15px currentColor;color:#111;">22:00</div>
<div class="t" id="t50" style="left:892.23px;top:456.00px;font-size:11px;-webkit-text-stroke:0.15px currentColor;color:#aaa;">00:00</div>
<div class="t" id="t51" style="left:888.75px;top:672.00px;font-size:11px;-webkit-text-stroke:0.15px currentColor;color:#111;transform:scaleX(0.9776);">Sollwert</div>
<div class="t" id="t52" style="left:342.20px;top:696.00px;font-size:11px;-webkit-text-stroke:0.15px currentColor;color:#222;transform:scaleX(0.9760);">Tagesverbrauch</div>
<div class="t" id="t53" style="left:342.20px;top:712.00px;font-size:11px;font-weight:bold;-webkit-text-stroke:0.3px currentColor;color:#707070;transform:scaleX(1.0862);">6,97 kWh</div>
<div class="t" id="t54" style="left:448.40px;top:696.00px;font-size:11px;-webkit-text-stroke:0.15px currentColor;color:#222;transform:scaleX(0.9469);">Netzbezug</div>
<div class="t" id="t55" style="left:448.40px;top:712.00px;font-size:11px;font-weight:bold;-webkit-text-stroke:0.3px currentColor;color:#707070;transform:scaleX(1.0883);">3,28 kWh</div>
<div class="t" id="t56" style="left:533.30px;top:696.00px;font-size:11px;-webkit-text-stroke:0.15px currentColor;color:#222;transform:scaleX(0.9727);">Eigenversorgung</div>
<div class="t" id="t57" style="left:533.30px;top:712.00px;font-size:11px;font-weight:bold;-webkit-text-stroke:0.3px currentColor;color:#707070;transform:scaleX(1.0967);">3,68 kWh</div>
<div class="t" id="t58" style="left:643.75px;top:696.00px;font-size:11px;-webkit-text-stroke:0.15px currentColor;color:#222;transform:scaleX(0.9898);">Tagesertrag</div>
<div class="t" id="t59" style="left:643.75px;top:712.00px;font-size:11px;font-weight:bold;-webkit-text-stroke:0.3px currentColor;color:#707070;transform:scaleX(1.0918);">23,87 kWh</div>
<div class="t" id="t60" style="left:735.50px;top:696.00px;font-size:11px;-webkit-text-stroke:0.15px currentColor;color:#222;transform:scaleX(0.9667);">Eigenverbrauch</div>
<div class="t" id="t61" style="left:735.50px;top:712.00px;font-size:11px;font-weight:bold;-webkit-text-stroke:0.3px currentColor;color:#707070;transform:scaleX(1.1009);">3,68 kWh</div>
<div class="t" id="t62" style="left:839.50px;top:696.00px;font-size:11px;-webkit-text-stroke:0.15px currentColor;color:#222;transform:scaleX(0.9650);">Netzeinspeisung</div>
<div class="t" id="t63" style="left:839.50px;top:712.00px;font-size:11px;font-weight:bold;-webkit-text-stroke:0.3px currentColor;color:#707070;transform:scaleX(1.1010);">20,19 kWh</div>
<div class="t" id="t64" style="left:594.75px;top:747.00px;font-size:11px;-webkit-text-stroke:0.15px currentColor;color:#111;transform:scaleX(0.9871);">22.05.2017</div>
<div class="t" id="t65" style="left:312.50px;top:785.00px;font-size:11px;font-weight:bold;-webkit-text-stroke:0.3px currentColor;color:#666;transform:scaleX(1.0152);">Bilanz</div>
<div class="t" id="t66" style="left:335.00px;top:827.00px;font-size:11px;-webkit-text-stroke:0.15px currentColor;color:#222;transform:scaleX(0.9862);">Tagesverbrauch</div>
<div class="t" id="t67" style="left:335.00px;top:853.00px;font-size:11px;-webkit-text-stroke:0.15px currentColor;color:#222;transform:scaleX(0.9545);">Netzbezug</div>
<div class="t" id="t68" style="left:335.00px;top:879.00px;font-size:11px;-webkit-text-stroke:0.15px currentColor;color:#222;transform:scaleX(0.9751);">Eigenversorgung</div>
<div class="t" id="t69" style="left:335.00px;top:917.00px;font-size:11px;-webkit-text-stroke:0.15px currentColor;color:#222;transform:scaleX(0.9898);">Autarkiequote</div>
<div class="t" id="t70" style="left:666.25px;top:827.00px;font-size:11px;-webkit-text-stroke:0.15px currentColor;color:#222;">Tagesertrag</div>
<div class="t" id="t71" style="left:666.25px;top:853.00px;font-size:11px;-webkit-text-stroke:0.15px currentColor;color:#222;transform:scaleX(0.9674);">Eigenverbrauch</div>
<div class="t" id="t72" style="left:666.25px;top:879.00px;font-size:11px;-webkit-text-stroke:0.15px currentColor;color:#222;transform:scaleX(0.9607);">Netzeinspeisung</div>
<div class="t" id="t73" style="left:666.25px;top:917.00px;font-size:11px;-webkit-text-stroke:0.15px currentColor;color:#222;transform:scaleX(0.9752);">Eigenverbrauchsquote</div>
<div class="t" id="t74" style="left:546.70px;top:827.00px;font-size:11px;font-weight:bold;-webkit-text-stroke:0.3px currentColor;color:#666;transform:scaleX(1.0967);">6,97 kWh</div>
<div class="t" id="t75" style="left:546.70px;top:853.00px;font-size:11px;font-weight:bold;-webkit-text-stroke:0.3px currentColor;color:#666;transform:scaleX(1.0967);">3,28 kWh</div>
<div class="t" id="t76" style="left:546.70px;top:879.00px;font-size:11px;font-weight:bold;-webkit-text-stroke:0.3px currentColor;color:#666;transform:scaleX(1.0967);">3,68 kWh</div>
<div class="t" id="t77" style="left:568.90px;top:917.00px;font-size:11px;font-weight:bold;-webkit-text-stroke:0.3px currentColor;color:#666;transform:scaleX(1.2002);">53 %</div>
<div class="t" id="t78" style="left:870.90px;top:827.00px;font-size:11px;font-weight:bold;-webkit-text-stroke:0.3px currentColor;color:#666;transform:scaleX(1.0945);">23,87 kWh</div>
<div class="t" id="t79" style="left:877.50px;top:853.00px;font-size:11px;font-weight:bold;-webkit-text-stroke:0.3px currentColor;color:#666;transform:scaleX(1.0967);">3,68 kWh</div>
<div class="t" id="t80" style="left:870.90px;top:879.00px;font-size:11px;font-weight:bold;-webkit-text-stroke:0.3px currentColor;color:#666;transform:scaleX(1.0945);">20,19 kWh</div>
<div class="t" id="t81" style="left:899.70px;top:917.00px;font-size:11px;font-weight:bold;-webkit-text-stroke:0.3px currentColor;color:#666;transform:scaleX(1.2002);">15 %</div>
<div class="t" id="t82" style="left:10.30px;top:1026.00px;font-size:11px;-webkit-text-stroke:0.15px currentColor;color:#555;transform:scaleX(0.9927);">© 2017 SMA Solar Technology AG</div>
<div class="t" id="t83" style="left:201.80px;top:1026.00px;font-size:11px;-webkit-text-stroke:0.15px currentColor;color:#555;transform:scaleX(0.9770);">Startseite</div>
<div class="t" id="t84" style="left:272.20px;top:1026.00px;font-size:11px;-webkit-text-stroke:0.15px currentColor;color:#555;transform:scaleX(1.0267);">Information</div>
<div class="t" id="t85" style="left:354.40px;top:1026.00px;font-size:11px;-webkit-text-stroke:0.15px currentColor;color:#555;transform:scaleX(0.9696);">Bedienungsanleitungen</div>
<div class="t" id="t86" style="left:491.60px;top:1026.00px;font-size:11px;-webkit-text-stroke:0.15px currentColor;color:#555;transform:scaleX(0.8857);">FAQ</div>
<div class="t" id="t87" style="left:536.80px;top:1026.00px;font-size:11px;-webkit-text-stroke:0.15px currentColor;color:#555;transform:scaleX(0.9746);">Nutzungsbedingungen</div>
<div class="t" id="t88" style="left:670.00px;top:1026.00px;font-size:11px;-webkit-text-stroke:0.15px currentColor;color:#555;transform:scaleX(0.9802);">Datenschutzerklärung</div>
<div class="t" id="t89" style="left:800.00px;top:1026.00px;font-size:11px;-webkit-text-stroke:0.15px currentColor;color:#555;transform:scaleX(0.9925);">Impressum</div>
<div class="t" style="left:305px;top:495px;font-size:11px;color:#111;transform:rotate(-90deg)">Leistung [W]</div>

</body></html>
